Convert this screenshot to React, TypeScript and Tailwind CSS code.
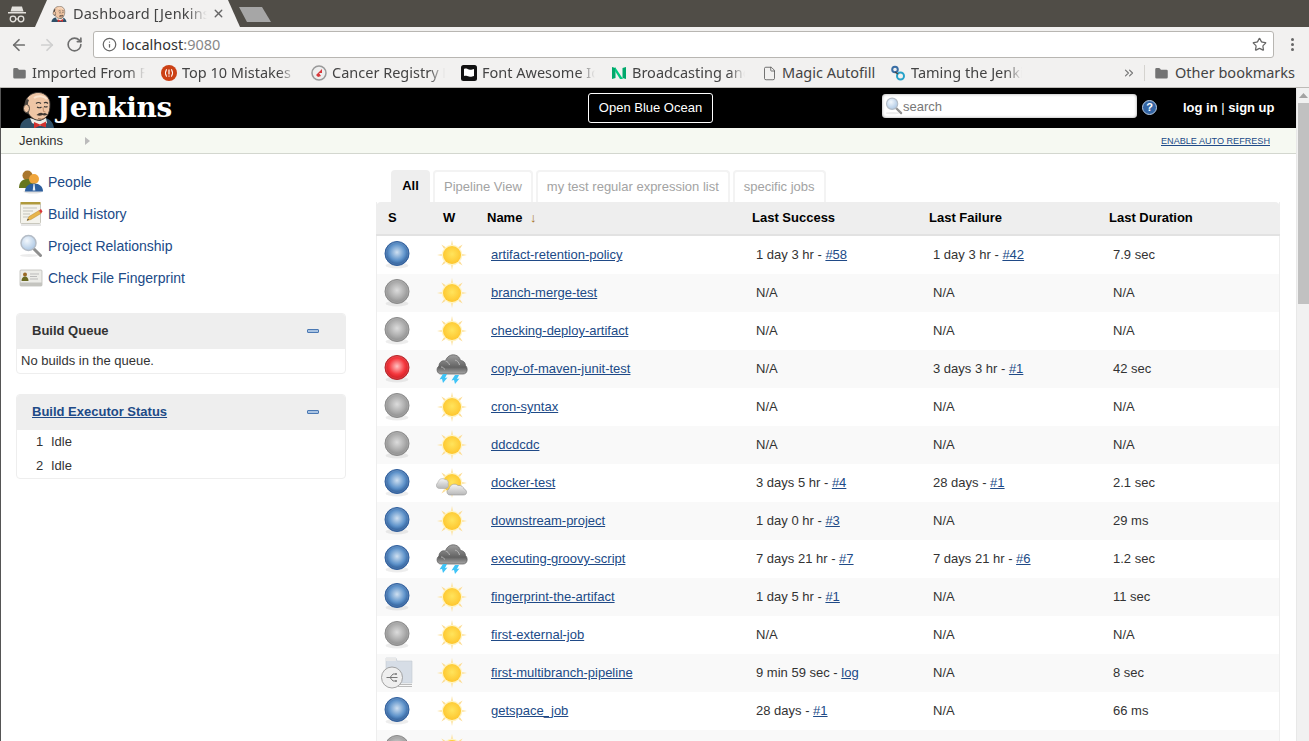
import React from "react";
import { ArrowLeft, ArrowRight, RotateCw, Info, Star, Folder, File, ChevronsRight, X } from "lucide-react";

const sans = "font-['Liberation_Sans',Arial,sans-serif]";
const ui = "font-['Noto_Sans',sans-serif]";

function Butler({ size = 36 }: { size?: number }) {
  return (
    <svg width={size} height={size} viewBox="0 0 36 36" className="block">
      <path d="M1 36c.5-6 4-9 9-10l8 3 8-3c5 1 8 4 9 10z" fill="#2f5068" />
      <path d="M11 26l10 3 6-3 1 5-7 3-8-3z" fill="#eeeee8" />
      <path d="M15 30l6 2.500 6-3v6l-6-2-6 3z" fill="#d4332f" />
      <path d="M6 13C6 5 13 0 20 .5c6 .5 11 5 11 11.500 0 5-.5 8.500-3 12-3 4-8 5-12 3.500C11 25.500 7 19 6 13z" fill="#efc6a5" stroke="#3a3734" strokeWidth=".9" />
      <path d="M8 7c-2.500 3-3.500 8-1.500 14l3 1 .5-5c-1.500-3-1.500-6 0-9z" fill="#4a4540" />
      <ellipse cx="7.500" cy="16.500" rx="3" ry="4" fill="#efc6a5" stroke="#3a3734" strokeWidth=".8" />
      <path d="M15 6c4-3 10-2 13 1" fill="none" stroke="#fbe3cd" strokeWidth="2" />
      <path d="M17 11.500q2.500-2 5 0M25 11q2-1.500 4 .5" fill="none" stroke="#3a3734" strokeWidth="1.200" />
      <path d="M18 15q2.500 1.500 4.500 0M25 14.500q2 1 3.500 0" fill="none" stroke="#3a3734" strokeWidth="1.100" />
      <path d="M24 15l.5 4.500 2 .5" fill="none" stroke="#b98a68" strokeWidth=".9" />
      <path d="M17.500 23q4-3.500 6.500-1.500 2.500-1.500 4.500 1-3 1.500-5 .5-2.500 1.500-6 0z" fill="#3f3833" />
      <path d="M19 26.500q4 1.500 7-.5" fill="none" stroke="#8b5f46" strokeWidth=".8" />
    </svg>
  );
}

function Ball({ color, id }: { color: "blue" | "grey" | "red"; id: string }) {
  const c = {
    blue: ["#cfe0f1", "#6094cb", "#24528f", "#2f5f9e"],
    grey: ["#dcdcdc", "#adadad", "#8a8a8a", "#8a8a8a"],
    red: ["#ffc2c2", "#f5393f", "#c9181e", "#b5262a"],
  }[color];
  return (
    <svg width="28" height="30" viewBox="0 0 28 30" className="block">
      <defs>
        <radialGradient id={id} cx=".5" cy=".45" r=".55">
          <stop offset="0" stopColor={c[0]} />
          <stop offset=".6" stopColor={c[1]} />
          <stop offset="1" stopColor={c[2]} />
        </radialGradient>
      </defs>
      <ellipse cx="14" cy="25.500" rx="11.500" ry="3" fill="#000" opacity=".07" />
      <circle cx="14" cy="13.500" r="12" fill={`url(#${id})`} stroke={c[3]} strokeWidth="1" />
      <circle cx="14" cy="13.500" r="11" fill="none" stroke="#fff" strokeOpacity=".15" strokeWidth=".8" />
    </svg>
  );
}

function SunShape({ id }: { id: string }) {
  const rays = [0, 45, 90, 135, 180, 225, 270, 315];
  return (
    <>
      <defs>
        <radialGradient id={id} cx=".5" cy=".45" r=".55">
          <stop offset="0" stopColor="#ffe45c" />
          <stop offset="1" stopColor="#fec62e" />
        </radialGradient>
      </defs>
      {rays.map((r) => (
        <path key={r} d="M12.500 16 L16 1 L19.500 16z" fill={r % 90 === 0 ? "#fde6ab" : "#fcdc93"} transform={`rotate(${r} 16 16)`} />
      ))}
      <circle cx="16" cy="16" r="10.300" fill="#fff4c4" />
      <circle cx="16" cy="16" r="9" fill={`url(#${id})`} />
    </>
  );
}

function Sun({ id }: { id: string }) {
  return (
    <svg width="32" height="32" viewBox="0 0 32 32" className="block">
      <SunShape id={id} />
    </svg>
  );
}

function Storm({ id }: { id: string }) {
  const bolt = "l-3.500 5.500 2.500-.5L10 32l4.500-5.500-2.500.5L14 23z";
  return (
    <svg width="32" height="32" viewBox="0 0 32 32" className="block">
      <defs>
        <linearGradient id={id} x1="0" y1="0" x2="0" y2="1">
          <stop offset="0" stopColor="#a0a0a0" />
          <stop offset=".65" stopColor="#626262" />
          <stop offset="1" stopColor="#a8a8a8" />
        </linearGradient>
      </defs>
      <g transform="translate(0 -3)">
        <path d="M5 24C1 24-.500 18.500 3 16c0-4 3.500-6 6.500-5 1-4 5-7 9.500-6 3 .5 5 3 5.500 5.500 3 0 5 2.500 5 5 2.500 2 2.500 8.500-2.500 8.500z" fill={`url(#${id})`} stroke="#5a5a5a" strokeWidth=".7" />
        <path d="M9.500 11c2 .5 3.500 2 4 4M19 10c2 .5 4 2 4.500 5M5 17c2 0 3 1 3.500 2.500" fill="none" stroke="#b5b5b5" strokeWidth="1" />
      </g>
      <path d={`M10 23${bolt}`} fill="#3fc4f7" transform="translate(-3 -2)" />
      <path d={`M10 23${bolt}`} fill="#3fc4f7" transform="translate(9 -1)" />
    </svg>
  );
}

function Partly({ id, gid }: { id: string; gid: string }) {
  return (
    <svg width="32" height="32" viewBox="0 0 32 32" className="block">
      <defs>
        <linearGradient id={gid} x1="0" y1="0" x2="0" y2="1">
          <stop offset="0" stopColor="#f6f6f6" />
          <stop offset="1" stopColor="#b8b8b8" />
        </linearGradient>
      </defs>
      <SunShape id={id} />
      <path d="M3.500 21.500C0 21.500-.500 17 2 15.500c.5-3.500 4.500-5 7-3 2.500 0 4 2.500 3 4.500 1 2 0 4.500-2.500 4.500z" fill={`url(#${gid})`} stroke="#aaa" strokeWidth=".6" />
      <path d="M14 28c-3.500 0-4-5-1-6 .5-4 5.500-6.500 9-3.500 3.500-.5 5.500 1.500 6 3.500 3 .5 4 6-.5 6z" fill={`url(#${gid})`} stroke="#999" strokeWidth=".6" />
    </svg>
  );
}

function FolderBranch() {
  return (
    <svg width="34" height="32" viewBox="0 0 34 32" className="block">
      <path d="M6 1h10l1 3h15v22H6z" fill="#d6dde6" stroke="#c3c9d0" strokeWidth=".6" />
      <path d="M6 1h10v3H6z" fill="#e9e9e9" />
      <path d="M16 27h16v1H16zM18 29h14v1H18z" fill="#bbb" />
      <circle cx="12" cy="20.500" r="10.500" fill="#efefef" stroke="#9a9a9a" strokeWidth=".9" />
      <path d="M6.500 20.500h11M10 20.500l3-3.500h2.500M10 20.500l3 3.500h2.500" fill="none" stroke="#777" strokeWidth="1" />
      <circle cx="16" cy="17" r="1" fill="#777" />
      <circle cx="16" cy="24" r="1" fill="#777" />
    </svg>
  );
}

function People() {
  return (
    <svg width="24" height="24" viewBox="0 0 24 24" className="block">
      <circle cx="8.500" cy="5.500" r="5" fill="#a9762d" />
      <path d="M0 18c0-6 3.500-9 8.500-9S17 12 17 18z" fill="#66761f" />
      <ellipse cx="14" cy="21.500" rx="9.500" ry="2" fill="#000" opacity=".12" />
      <circle cx="15" cy="9" r="5" fill="#f0a63c" />
      <path d="M6 21.500c0-5 3.500-8 9-8s9 3 9 8z" fill="#2d5f9e" />
      <path d="M14.500 14h1l.800 6.500h-2.600z" fill="#e6eef6" />
    </svg>
  );
}

function Notepad() {
  return (
    <svg width="24" height="24" viewBox="0 0 24 24" className="block">
      <rect x="1.500" y="1.500" width="20" height="20" rx="1" fill="#f4f3ec" stroke="#b5b3a6" strokeWidth=".7" />
      <rect x="1.500" y="0" width="20" height="2.500" fill="#b09a3c" />
      <path d="M4 6h14M4 9h10M4 12h7M4 15h6" stroke="#c3c3bb" strokeWidth="1" />
      <path d="M8 18.500l2-4 10-6 2 3-10 6z" fill="#e8b54c" stroke="#a97c24" strokeWidth=".4" />
      <path d="M20 8.500l2 3 1.500-2-1.500-2.500z" fill="#d8393a" />
      <path d="M8 18.500l.8-1.800 1.400 1z" fill="#444" />
      <path d="M2 23h20" stroke="#ccc" strokeWidth="1" />
    </svg>
  );
}

function Magnifier({ size = 24 }: { size?: number }) {
  return (
    <svg width={size} height={size} viewBox="0 0 24 24" className="block">
      <defs>
        <radialGradient id="lens" cx=".4" cy=".35" r=".7">
          <stop offset="0" stopColor="#f3f8fd" />
          <stop offset="1" stopColor="#a9c5e3" />
        </radialGradient>
      </defs>
      <ellipse cx="10" cy="21.500" rx="9" ry="1.500" fill="#000" opacity=".08" />
      <path d="M15 15l6.500 6.500" stroke="#8f8f8f" strokeWidth="3" strokeLinecap="round" />
      <circle cx="9.500" cy="9" r="7.500" fill="url(#lens)" stroke="#b4bcc6" strokeWidth="1.500" />
    </svg>
  );
}

function IdCard() {
  return (
    <svg width="24" height="24" viewBox="0 0 24 24" className="block">
      <rect x="1" y="4" width="22" height="16" rx="1" fill="#ecece8" stroke="#b5b5b0" strokeWidth=".7" />
      <rect x="1" y="16.500" width="22" height="3.500" fill="#c4c4bf" />
      <circle cx="6" cy="8.500" r="2" fill="#9a6a26" />
      <path d="M2.500 15c0-3 1.500-4.500 3.500-4.500S9.500 12 9.500 15z" fill="#6a6a22" />
      <path d="M11 8h9M11 10.500h7M11 13h8" stroke="#bbb" strokeWidth="1" />
    </svg>
  );
}

function Minus() {
  return <div className="w-[12px] h-[4px] bg-[#a9c3e2] border border-[#4a78b3] rounded-[1px]" />;
}

function Task({ icon, label }: { icon: React.ReactNode; label: string }) {
  return (
    <div className="h-[32px] flex items-center pl-[18px]">
      <div className="w-[24px] h-[24px]">{icon}</div>
      <a className="ml-[5px] text-[14px] text-[#204a87]">{label}</a>
    </div>
  );
}

function Bookmark({ icon, label, w, pl, fade = true }: { icon: React.ReactNode; label: string; w: number; pl: number; fade?: boolean }) {
  return (
    <div className={`flex items-center shrink-0 overflow-hidden ${fade ? "pr-[11px]" : ""}`} style={{ width: w, paddingLeft: pl }}>
      <div className="w-[16px] h-[16px] shrink-0 flex items-center justify-center">{icon}</div>
      <span
        className={`ml-[5px] whitespace-nowrap overflow-hidden flex-1 text-[14.500px] text-[#444] ${
          fade ? "[mask-image:linear-gradient(to_right,#000_86%,transparent_100%)]" : ""
        }`}
      >
        {label}
      </span>
    </div>
  );
}

type Row = { b: "blue" | "grey" | "red" | "folder"; w: "sun" | "storm" | "partly"; n: string; s?: [string, string]; f?: [string, string]; d: string };
const rows: Row[] = [
  { b: "blue", w: "sun", n: "artifact-retention-policy", s: ["1 day 3 hr", "#58"], f: ["1 day 3 hr", "#42"], d: "7.9 sec" },
  { b: "grey", w: "sun", n: "branch-merge-test", d: "N/A" },
  { b: "grey", w: "sun", n: "checking-deploy-artifact", d: "N/A" },
  { b: "red", w: "storm", n: "copy-of-maven-junit-test", f: ["3 days 3 hr", "#1"], d: "42 sec" },
  { b: "grey", w: "sun", n: "cron-syntax", d: "N/A" },
  { b: "grey", w: "sun", n: "ddcdcdc", d: "N/A" },
  { b: "blue", w: "partly", n: "docker-test", s: ["3 days 5 hr", "#4"], f: ["28 days", "#1"], d: "2.1 sec" },
  { b: "blue", w: "sun", n: "downstream-project", s: ["1 day 0 hr", "#3"], d: "29 ms" },
  { b: "blue", w: "storm", n: "executing-groovy-script", s: ["7 days 21 hr", "#7"], f: ["7 days 21 hr", "#6"], d: "1.2 sec" },
  { b: "blue", w: "sun", n: "fingerprint-the-artifact", s: ["1 day 5 hr", "#1"], d: "11 sec" },
  { b: "grey", w: "sun", n: "first-external-job", d: "N/A" },
  { b: "folder", w: "sun", n: "first-multibranch-pipeline", s: ["9 min 59 sec", "log"], d: "8 sec" },
  { b: "blue", w: "sun", n: "getspace_job", s: ["28 days", "#1"], d: "66 ms" },
  { b: "grey", w: "sun", n: "", d: "" },
];

const grid = "grid grid-cols-[55px_44px_265px_177px_180px_1fr]";

function Val({ v }: { v?: [string, string] }) {
  if (!v) return <div className="pl-[15px]">N/A</div>;
  return (
    <div className="pl-[15px]">
      {v[0]} - <a className="underline text-[#204a87]">{v[1]}</a>
    </div>
  );
}

export default function App() {
  return (
    <div className={`w-[1309px] h-[741px] overflow-hidden flex flex-col bg-white ${sans}`}>
      {/* tab strip */}
      <div className={`h-[27px] bg-[#504d47] flex items-end shrink-0 ${ui}`}>
        <div className="w-[35px] h-[27px] flex items-center justify-center shrink-0 pr-[2px]">
          <svg width="20" height="20" viewBox="0 0 20 20">
            <path d="M5 2.500h10l1.500 5h-13z" fill="#e4e2de" />
            <rect x="1" y="8" width="18" height="1.500" fill="#e4e2de" />
            <circle cx="6" cy="15" r="2.800" fill="none" stroke="#e4e2de" strokeWidth="1.300" />
            <circle cx="14" cy="15" r="2.800" fill="none" stroke="#e4e2de" strokeWidth="1.300" />
            <path d="M8.800 15h2.400" stroke="#e4e2de" strokeWidth="1.200" />
          </svg>
        </div>
        <div className="w-[205px] h-[27px] bg-[#f2f1f0] flex items-center pl-[16px] shrink-0 [clip-path:polygon(0_100%,12px_0,calc(100%-12px)_0,100%_100%)]">
          <Butler size={16} />
          <span className="ml-[6px] w-[134px] overflow-hidden whitespace-nowrap text-[14.500px] tracking-[0.2px] text-[#444] [mask-image:linear-gradient(to_right,#000_85%,transparent_100%)]">
            Dashboard [Jenkins]
          </span>
          <X size={13} strokeWidth={2.500} className="ml-[5px] text-[#666]" />
        </div>
        <div className="w-[32px] h-[15px] mb-[5px] ml-[-1px] bg-[#a6a6a6] [clip-path:polygon(0_0,23px_0,100%_100%,8px_100%)]" />
      </div>

      {/* toolbar */}
      <div className={`h-[33px] bg-[#f2f1f0] flex items-center shrink-0 pt-[2px] ${ui}`}>
        <div className="w-[93px] flex items-center pl-[10px] gap-[10px] shrink-0">
          <ArrowLeft size={18} strokeWidth={2.300} className="text-[#6e6e6e]" />
          <ArrowRight size={18} strokeWidth={2.300} className="text-[#cfcfcf]" />
          <RotateCw size={17} strokeWidth={2.300} className="text-[#6e6e6e]" />
        </div>
        <div className="w-[1181px] h-[27px] bg-white border border-[#b8b6b2] rounded-[3px] flex items-center pl-[8px] pr-[6px] shrink-0">
          <Info size={15} className="text-[#666]" />
          <span className="ml-[5px] text-[14.500px] text-[#333]">
            localhost<span className="text-[#888]">:9080</span>
          </span>
          <Star size={15} className="ml-auto text-[#666]" />
        </div>
        <div className="flex-1 flex flex-col items-center gap-[2px] pl-[1px]">
          <div className="w-[3px] h-[3px] rounded-full bg-[#666]" />
          <div className="w-[3px] h-[3px] rounded-full bg-[#666]" />
          <div className="w-[3px] h-[3px] rounded-full bg-[#666]" />
        </div>
      </div>

      {/* bookmarks */}
      <div className={`h-[28px] bg-[#f2f1f0] border-b border-[#bdbbb7] flex items-center shrink-0 pb-[1px] ${ui}`}>
        <Bookmark w={156} pl={11} label="Imported From Firefox" icon={<Folder size={15} fill="#737373" strokeWidth={0} />} />
        <Bookmark w={150} pl={5} label="Top 10 Mistakes Made" icon={
          <svg width="16" height="16" viewBox="0 0 16 16"><circle cx="8" cy="8" r="8" fill="#cc4115" /><path d="M6 4.500c-1.500 0-1 3.500-2 3.500 1 0 .5 3.500 2 3.500M10 4.500c1.500 0 1 3.500 2 3.500-1 0-.5 3.500-2 3.500" fill="none" stroke="#fff" strokeWidth="1.200" /><rect x="7.400" y="4.500" width="1.200" height="5" fill="#fff" /><rect x="7.400" y="10.500" width="1.200" height="1.200" fill="#fff" /></svg>
        } />
        <Bookmark w={150} pl={5} label="Cancer Registry Portal" icon={
          <svg width="16" height="16" viewBox="0 0 16 16"><circle cx="8" cy="8" r="7" fill="#eee" stroke="#999" strokeWidth="1.500" /><path d="M5 10l6-6v4H8l2 3-3 1z" fill="#d8383a" /></svg>
        } />
        <Bookmark w={150} pl={5} label="Font Awesome Icons" icon={
          <svg width="16" height="16" viewBox="0 0 16 16"><rect width="16" height="16" rx="2.500" fill="#111" /><path d="M3 4c2-1 3 0 5 .5s3 0 5-.5v7c-2 .5-3 1-5 .5s-3-1-5-.5z" fill="#fff" /></svg>
        } />
        <Bookmark w={150} pl={5} label="Broadcasting and Recording" icon={
          <svg width="14" height="14" viewBox="0 0 14 14"><path d="M0 1l3.500 1v10L0 13zM14 1l-3.500 1v10l3.500 1z" fill="#00a86b" /><path d="M3 1l8 12H8L3 5z" fill="#00c97f" /></svg>
        } />
        <Bookmark w={129} pl={5} fade={false} label="Magic Autofill" icon={<File size={15} strokeWidth={1.300} className="text-[#555]" />} />
        <Bookmark w={148} pl={5} label="Taming the Jenkins JSON" icon={
          <svg width="16" height="17" viewBox="0 0 16 17"><circle cx="5" cy="4.500" r="2.800" fill="none" stroke="#3a6ea5" strokeWidth="2" /><circle cx="10.500" cy="11" r="3.500" fill="none" stroke="#27a2c9" strokeWidth="2" /><path d="M5 7l3 2" stroke="#444" strokeWidth="1.500" /></svg>
        } />
        <div className="w-[111px] flex items-center justify-end pr-[8px] shrink-0">
          <ChevronsRight size={14} className="text-[#777]" />
        </div>
        <div className="w-px h-[16px] bg-[#d5d3cf] shrink-0" />
        <div className="flex items-center ml-[9px] whitespace-nowrap">
          <Folder size={15} fill="#737373" strokeWidth={0} />
          <span className="ml-[6px] text-[14.500px] text-[#444]">Other bookmarks</span>
        </div>
      </div>

      {/* page */}
      <div className="flex-1 min-h-0 flex border-l border-[#555]">
        <div className="flex-1 min-w-0 flex flex-col overflow-hidden">
          {/* header */}
          <div className="h-[40px] bg-black flex items-center shrink-0">
            <div className="w-[587px] shrink-0 h-full flex items-center pl-[18px]">
              <div className="w-[36px] h-[36px] self-end overflow-hidden shrink-0"><Butler size={36} /></div>
              <div className="ml-[2px] font-['DejaVu_Serif',serif] font-bold text-[28px] tracking-[-0.4px] text-white leading-none">Jenkins</div>
            </div>
            <div className="w-[125px] h-[30px] border border-white rounded-[3px] flex items-center justify-center text-[13px] text-white">Open Blue Ocean</div>
            <div className="ml-[169px] mb-[4px] w-[255px] h-[24px] bg-white rounded-[4px] flex items-center pl-[3px] shadow-[inset_0_0_3px_#999]">
              <Magnifier size={18} />
              <span className="pt-[1px] text-[13px] text-[#777]">search</span>
            </div>
            <div className="ml-[5px] mb-[2px] w-[15px] h-[15px] rounded-full bg-[#3465a4] border border-[#b8cce4] flex items-center justify-center text-[11px] font-bold text-white">?</div>
            <div className="ml-[26px] text-[13px] font-bold text-white whitespace-nowrap">log in <span className="font-normal">|</span> sign up</div>
          </div>
          {/* breadcrumb */}
          <div className="h-[26px] bg-[#f6f9f2] border-b border-[#d3d7cf] flex items-center shrink-0 pl-[18px] pr-[26px] text-[13px] text-[#333] pt-[1px]">
            <span>Jenkins</span>
            <svg width="5" height="8" viewBox="0 0 5 8" className="ml-[22px]"><path d="M0 0l5 4-5 4z" fill="#bbb" /></svg>
            <a className="ml-auto mt-[1px] text-[9.100px] underline text-[#204a87]">ENABLE AUTO REFRESH</a>
          </div>
          {/* content */}
          <div className="flex-1 min-h-0 flex">
            <div className="w-[375px] shrink-0 pt-[12px] text-[13px] text-[#333]">
              <Task icon={<People />} label="People" />
              <Task icon={<Notepad />} label="Build History" />
              <Task icon={<Magnifier />} label="Project Relationship" />
              <Task icon={<IdCard />} label="Check File Fingerprint" />
              <div className="mt-[19px] ml-[15px] w-[330px] border border-[#eee] rounded-[4px] overflow-hidden">
                <div className="h-[35px] pb-[1px] bg-[#eee] flex items-center pl-[15px] pr-[26px] justify-between">
                  <span className="font-bold">Build Queue</span>
                  <Minus />
                </div>
                <div className="h-[24px] flex items-center pl-[4px]">No builds in the queue.</div>
              </div>
              <div className="mt-[20px] ml-[15px] w-[330px] border border-[#eee] rounded-[4px] overflow-hidden">
                <div className="h-[35px] pb-[1px] bg-[#eee] flex items-center pl-[15px] pr-[26px] justify-between">
                  <a className="font-bold underline text-[#204a87]">Build Executor Status</a>
                  <Minus />
                </div>
                <div>
                  {["1", "2"].map((n) => (
                    <div key={n} className="h-[24px] flex items-center pl-[19px]">
                      <span className="w-[15px]">{n}</span>
                      <span>Idle</span>
                    </div>
                  ))}
                </div>
              </div>
            </div>
            <div className="flex-1 min-w-0 pr-[16px] pt-[16px] text-[13px] text-[#333]">
              <div className="flex gap-[3px] pl-[15px] h-[32px]">
                <div className="w-[39px] bg-[#eee] rounded-t-[4px] flex items-center justify-center font-bold text-black">All</div>
                {["Pipeline View", "my test regular expression list", "specific jobs"].map((t) => (
                  <div key={t} className="px-[9px] border-2 border-b-0 border-[#f3f3f3] rounded-t-[4px] flex items-center text-[#a3a3a3] whitespace-nowrap">{t}</div>
                ))}
              </div>
              <div className="border-x border-[#eee]">
                <div className={`${grid} h-[34px] bg-[#eee] border-b-2 border-[#e2e2e2] rounded-t-[5px] items-center font-bold text-black -mx-px px-px`}>
                  <div className="pl-[11px]">S</div>
                  <div className="pl-[11px]">W</div>
                  <div className="pl-[11px]">Name <span className="ml-[4px] text-[13px] font-bold text-[#a5701a]">↓</span></div>
                  <div className="pl-[11px]">Last Success</div>
                  <div className="pl-[11px]">Last Failure</div>
                  <div className="pl-[11px]">Last Duration</div>
                </div>
                {rows.map((r, i) => (
                  <div key={i} className={`${grid} h-[38px] items-center ${i % 2 ? "bg-[#f9f9f9]" : "bg-white"}`}>
                    <div className="pl-[6px]">
                      {r.b === "folder" ? (
                        <div className="ml-[-3px]"><FolderBranch /></div>
                      ) : (
                        <Ball color={r.b} id={`ball${i}`} />
                      )}
                    </div>
                    <div className="pl-[4px]">
                      {r.w === "sun" && <Sun id={`sun${i}`} />}
                      {r.w === "storm" && <Storm id={`storm${i}`} />}
                      {r.w === "partly" && <Partly id={`sun${i}`} gid={`cloud${i}`} />}
                    </div>
                    {r.n ? (
                      <>
                        <div className="pl-[15px]"><a className="underline text-[#204a87]">{r.n}</a></div>
                        <Val v={r.s} />
                        <Val v={r.f} />
                        <div className="pl-[15px]">{r.d}</div>
                      </>
                    ) : null}
                  </div>
                ))}
              </div>
            </div>
          </div>
        </div>
        {/* scrollbar */}
        <div className="w-[13px] bg-[#f1f1f1] shrink-0 flex flex-col items-center border-l border-[#e8e8e8]">
          <svg width="9" height="5" viewBox="0 0 9 5" className="mt-[5px]"><path d="M4.500 0L9 5H0z" fill="#a3a3a3" /></svg>
          <div className="mt-[5px] w-[11px] h-[201px] bg-[#c1c1c1]" />
        </div>
      </div>
    </div>
  );
}
